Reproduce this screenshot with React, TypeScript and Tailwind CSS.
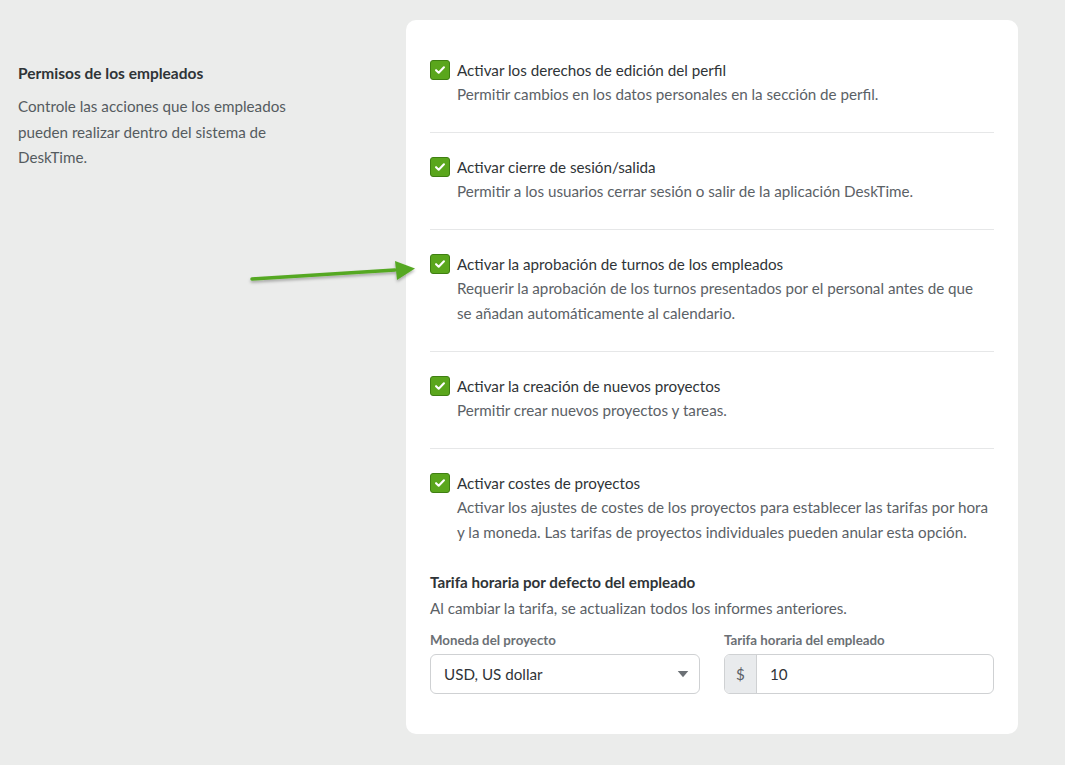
const permissions = [
  {
    title: 'Activar los derechos de edición del perfil',
    desc: 'Permitir cambios en los datos personales en la sección de perfil.',
  },
  {
    title: 'Activar cierre de sesión/salida',
    desc: 'Permitir a los usuarios cerrar sesión o salir de la aplicación DeskTime.',
  },
  {
    title: 'Activar la aprobación de turnos de los empleados',
    desc: 'Requerir la aprobación de los turnos presentados por el personal antes de que se\u00a0añadan automáticamente al calendario.',
  },
  {
    title: 'Activar la creación de nuevos proyectos',
    desc: 'Permitir crear nuevos proyectos y tareas.',
  },
  {
    title: 'Activar costes de proyectos',
    desc: 'Activar los ajustes de costes de los proyectos para establecer las tarifas por hora y la moneda. Las tarifas de proyectos individuales pueden anular esta opción.',
  },
]

function Check() {
  return (
    <div className="mt-[2px] flex h-5 w-5 shrink-0 items-center justify-center rounded-[3px] border border-[#3f7f12] bg-[#5aa61c]">
      <svg viewBox="0 0 16 16" className="h-3.5 w-3.5" fill="none" stroke="white" strokeWidth="2.4" strokeLinecap="round" strokeLinejoin="round">
        <path d="M3.5 8.2l3 2.9 6-6.2" />
      </svg>
    </div>
  )
}

export default function App() {
  return (
    <div
      className="relative min-h-[765px] bg-[#ebeceb] text-[15.2px] text-[#2f3437]"
      style={{ fontFamily: 'Lato, "Noto Sans", sans-serif' }}
    >
      <div className="flex px-[18px] pt-5 pb-8">
        <div className="w-[388px] shrink-0 pt-[41px]">
          <h2 className="text-[15.5px] font-bold leading-6 text-[#2f3437]">Permisos de los empleados</h2>
          <p className="mt-[9px] w-[290px] leading-[25.5px] text-[#555b60]">
            Controle las acciones que los empleados pueden realizar dentro del sistema de DeskTime.
          </p>
        </div>

        <div className="w-[612px] rounded-[10px] bg-white px-6 pt-4 pb-10">
          {permissions.map((p, i) => (
            <div
              key={i}
              className={`flex gap-[7px] pt-[22px] pb-[25px] ${i < permissions.length - 1 ? 'border-b border-[#e6e7e8]' : ''}`}
            >
              <Check />
              <div>
                <div className="leading-6 text-[#2f3437]">{p.title}</div>
                <div className="leading-[25px] text-[#5b6166]">{p.desc}</div>
              </div>
            </div>
          ))}

          <div>
            <div className="font-bold leading-6 text-[#2f3437]">Tarifa horaria por defecto del empleado</div>
            <div className="mt-[2px] leading-6 text-[#5b6166]">
              Al cambiar la tarifa, se actualizan todos los informes anteriores.
            </div>
            <div className="mt-[10px] grid grid-cols-2 gap-6">
              <div>
                <div className="text-[13.3px] font-bold leading-5 text-[#6b7075]">Moneda del proyecto</div>
                <div className="mt-[4px] flex h-10 items-center justify-between rounded-md border border-[#cfd1d3] bg-white pl-[13px] pr-[10px]">
                  <span className="text-[#2f3437]">USD, US dollar</span>
                  <svg viewBox="0 0 12 8" className="h-[7px] w-[12px]">
                    <path d="M0 0h12L6 7z" fill="#6b7075" />
                  </svg>
                </div>
              </div>
              <div>
                <div className="text-[13.3px] font-bold leading-5 text-[#6b7075]">Tarifa horaria del empleado</div>
                <div className="mt-[4px] flex h-10 overflow-hidden rounded-md border border-[#cfd1d3]">
                  <div className="flex w-8 items-center justify-center border-r border-[#cfd1d3] bg-[#e9ebed] text-[#5b6166]">$</div>
                  <div className="flex items-center pl-[13px] text-[#2f3437]">10</div>
                </div>
              </div>
            </div>
          </div>
        </div>
      </div>

      <svg className="pointer-events-none absolute left-[245px] top-[255px]" width="180" height="40" viewBox="0 0 180 40">
        <defs>
          <filter id="sh" x="-10%" y="-50%" width="120%" height="200%">
            <feDropShadow dx="0" dy="2" stdDeviation="1.5" floodColor="#000" floodOpacity="0.3" />
          </filter>
        </defs>
        <g filter="url(#sh)">
          <path d="M7 24 L150 15" stroke="#55a823" strokeWidth="3.5" strokeLinecap="round" />
          <path d="M150 6 L170 13.5 L152 25 Z" fill="#55a823" />
        </g>
      </svg>
    </div>
  )
}
